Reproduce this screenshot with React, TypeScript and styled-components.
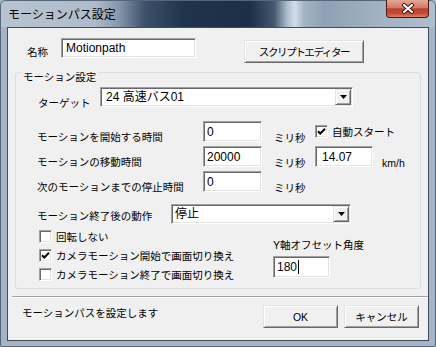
import React from "react";
import styled, { createGlobalStyle } from "styled-components";

const GlobalStyle = createGlobalStyle`
  html, body {
    margin: 0;
    padding: 0;
    background: #a5b5c6;
  }
`;

const sunken = `
  box-sizing: border-box;
  background: #ffffff;
  border-style: solid;
  border-width: 1px;
  border-color: #a0a0a0 #ffffff #ffffff #a0a0a0;
  box-shadow: inset 1px 1px 0 #696969, inset -1px -1px 0 #e3e3e3;
`;

const raised = `
  box-sizing: border-box;
  background: #f0f0f0;
  border-style: solid;
  border-width: 1px;
  border-color: #e3e3e3 #696969 #696969 #e3e3e3;
  box-shadow: inset 1px 1px 0 #ffffff, inset -1px -1px 0 #a0a0a0;
`;

const FrameWindow = styled.div`
  width: 436px;
  height: 347px;
  box-sizing: border-box;
  display: flex;
  flex-direction: column;
  background-color: #a5b5c6;
  border: 1px solid #56657a;
  border-radius: 6px 6px 2px 2px;
  font-family: "Liberation Sans", "Noto Sans CJK JP", sans-serif;
  font-size: 10.5px;
  color: #000;
`;

const Caption = styled.div`
  height: 26px;
  flex: none;
  display: flex;
  justify-content: space-between;
  align-items: flex-start;
  border-radius: 5px 5px 0 0;
  background-color: #5d7189;
  background-image: linear-gradient(90deg, #b6c4d1 0px, #aebccb 94px, #8799ad 117px, #3c5069 144px, #1f334b 184px, #1c2f46 249px, #44586f 273px, #aabbcc 286px, #d2dde8 294px, #a4b4c4 303px, #8fa1b4 324px, #a2b2c2 379px, #b0bfcd 434px);
`;

const CaptionText = styled.span`
  margin: 6px 0 0 7px;
  line-height: 14px;
  font-size: 12px;
  font-family: "Noto Sans CJK JP", sans-serif;
  color: #000;
`;

const CloseBtn = styled.div`
  width: 43px;
  height: 18px;
  margin-right: 6px;
  margin-top: -1px;
  box-sizing: border-box;
  border: 1px solid #4a1a12;
  border-top-width: 0;
  border-radius: 0 0 4px 4px;
  display: flex;
  align-items: center;
  justify-content: center;
  background-color: #c64a34;
  background-image: linear-gradient(180deg, #e4a797, #d27a66 45%, #c1412b 52%, #c24a33 78%, #de7f63);
`;

const ClientArea = styled.div`
  flex: none;
  width: 422px;
  height: 314px;
  margin-left: 6px;
  box-sizing: border-box;
  border: 1px solid #3f4c5b;
  background: #f0f0f0;
  display: flex;
  flex-direction: column;
`;

const NameRow = styled.div`
  display: flex;
  align-items: flex-start;
  height: 25px;
  margin-top: 10px;
  padding-left: 19px;
`;

const FieldLabel = styled.span<{ $w?: number; $top?: number; $pl?: number }>`
  display: block;
  flex: none;
  width: ${(p) => (p.$w ? `${p.$w}px` : "auto")};
  margin-top: ${(p) => p.$top ?? 0}px;
  padding-left: ${(p) => p.$pl ?? 0}px;
  line-height: 14px;
  white-space: nowrap;
  box-sizing: border-box;
`;

const EditBox = styled.div<{ $w: number; $h: number; $pl?: number }>`
  ${sunken};
  flex: none;
  width: ${(p) => p.$w}px;
  height: ${(p) => p.$h}px;
  padding-left: ${(p) => p.$pl ?? 3}px;
  display: flex;
  align-items: center;
  font-size: 12px;
  line-height: 14px;
  white-space: nowrap;
`;

const Caret = styled.span`
  display: inline-block;
  width: 1px;
  height: 14px;
  background: #000;
  margin-left: 1px;
`;

const PushBtn = styled.div<{ $w: number; $ml?: number; $mt?: number; $ls?: number }>`
  ${raised};
  flex: none;
  width: ${(p) => p.$w}px;
  height: 23px;
  margin-left: ${(p) => p.$ml ?? 0}px;
  margin-top: ${(p) => p.$mt ?? 0}px;
  display: flex;
  align-items: center;
  justify-content: center;
  line-height: 14px;
  letter-spacing: ${(p) => p.$ls ?? 0}px;
  white-space: nowrap;
`;

const Group = styled.div`
  position: relative;
  box-sizing: border-box;
  width: 406px;
  height: 217px;
  margin: 9px 0 0 7px;
  border: 1px solid #d5dfe5;
  border-radius: 3px;
  padding: 14px 0 0 21px;
  display: flex;
  flex-direction: column;
`;

const GroupCaption = styled.span`
  position: absolute;
  left: 5px;
  top: -3px;
  padding: 0 2px;
  background: #f0f0f0;
  line-height: 14px;
  white-space: nowrap;
`;

const FieldRow = styled.div<{ $mt?: number }>`
  display: flex;
  align-items: flex-start;
  margin-top: ${(p) => p.$mt ?? 0}px;
`;

const ComboBox = styled.div<{ $w: number }>`
  ${sunken};
  flex: none;
  width: ${(p) => p.$w}px;
  height: 20px;
  padding: 1px;
  display: flex;
  align-items: center;
`;

const ComboValue = styled.span<{ $pl: number }>`
  flex: 1;
  padding-left: ${(p) => p.$pl}px;
  font-size: 12px;
  line-height: 14px;
  white-space: nowrap;
`;

const DropBtn = styled.span`
  ${raised};
  flex: none;
  width: 16px;
  height: 16px;
  display: flex;
  align-items: center;
  justify-content: center;
`;

const TimeGrid = styled.div`
  display: grid;
  grid-template-columns: 166px 59px 53px auto;
  grid-auto-rows: 21px;
  row-gap: 4px;
  margin-top: 11px;
`;

const UnitText = styled.span<{ $top?: number; $pl?: number }>`
  display: block;
  margin-top: ${(p) => p.$top ?? 0}px;
  padding-left: ${(p) => p.$pl ?? 0}px;
  line-height: 14px;
  white-space: nowrap;
`;

const SpeedCell = styled.div`
  display: flex;
  align-items: flex-start;
`;

const CheckLine = styled.div<{ $h?: number; $pl?: number }>`
  display: flex;
  align-items: center;
  height: ${(p) => p.$h ?? 19}px;
  padding-left: ${(p) => p.$pl ?? 0}px;
  line-height: 14px;
  white-space: nowrap;
`;

const CheckSquare = styled.span`
  ${sunken};
  flex: none;
  width: 13px;
  height: 13px;
  margin-right: 4px;
  display: flex;
  align-items: center;
  justify-content: center;
`;

const LowerSection = styled.div`
  display: flex;
  margin-top: 3px;
`;

const CheckColumn = styled.div`
  width: 236px;
  display: flex;
  flex-direction: column;
`;

const OffsetColumn = styled.div`
  display: flex;
  flex-direction: column;
  gap: 4px;
  padding-top: 11px;
`;

const EtchedLine = styled.div`
  margin: 7px 0 0 4px;
  height: 0;
  border-top: 1px solid #a0a0a0;
  border-bottom: 1px solid #ffffff;
`;

const FooterRow = styled.div`
  display: flex;
  align-items: flex-start;
  margin-top: 7px;
  padding: 0 9px 0 14px;
`;

const StatusText = styled.span`
  flex: 1;
  margin-top: 1px;
  line-height: 14px;
  white-space: nowrap;
`;

const ButtonGroup = styled.div`
  display: flex;
  gap: 6px;
`;

const CheckMark = () => (
  <svg width="9" height="9" viewBox="0 0 9 9">
    <path d="M1 4.2 L3.3 6.5 L8 1.8" fill="none" stroke="#000" strokeWidth="2" />
  </svg>
);

const Check: React.FC<{ checked?: boolean; label: string; h?: number; pl?: number }> = ({
  checked,
  label,
  h,
  pl,
}) => (
  <CheckLine $h={h} $pl={pl}>
    <CheckSquare>{checked && <CheckMark />}</CheckSquare>
    {label}
  </CheckLine>
);

const Arrow = () => (
  <svg width="7" height="4" viewBox="0 0 7 4">
    <polygon points="0,0 7,0 3.5,4" fill="#000" />
  </svg>
);

const CloseGlyph = () => (
  <svg width="14" height="11" viewBox="0 0 14 11">
    <path d="M3 2 L11 9 M11 2 L3 9" stroke="#3a1008" strokeWidth="4" strokeLinecap="round" fill="none" />
    <path d="M3 2 L11 9 M11 2 L3 9" stroke="#ffffff" strokeWidth="2.2" strokeLinecap="round" fill="none" />
  </svg>
);

export default function App() {
  return (
    <>
      <GlobalStyle />
      <FrameWindow>
        <Caption>
          <CaptionText>モーションパス設定</CaptionText>
          <CloseBtn>
            <CloseGlyph />
          </CloseBtn>
        </Caption>
        <ClientArea>
          <NameRow>
            <FieldLabel $w={34} $top={7}>
              名称
            </FieldLabel>
            <EditBox $w={135} $h={20} $pl={4}>
              Motionpath
            </EditBox>
            <PushBtn $w={120} $ml={48} $mt={2} $ls={-1.4}>
              スクリプトエディター
            </PushBtn>
          </NameRow>

          <Group>
            <GroupCaption>モーション設定</GroupCaption>
            <FieldRow>
              <FieldLabel $w={63} $top={9} $pl={1}>
                ターゲット
              </FieldLabel>
              <ComboBox $w={253}>
                <ComboValue $pl={4}>24 高速バス01</ComboValue>
                <DropBtn>
                  <Arrow />
                </DropBtn>
              </ComboBox>
            </FieldRow>

            <TimeGrid>
              <FieldLabel $top={9}>モーションを開始する時間</FieldLabel>
              <EditBox $w={59} $h={21}>
                0
              </EditBox>
              <UnitText $top={10} $pl={12}>
                ミリ秒
              </UnitText>
              <Check checked label="自動スタート" h={21} />

              <FieldLabel $top={9}>モーションの移動時間</FieldLabel>
              <EditBox $w={59} $h={21}>
                20000
              </EditBox>
              <UnitText $top={10} $pl={12}>
                ミリ秒
              </UnitText>
              <SpeedCell>
                <EditBox $w={58} $h={21} $pl={6}>
                  14.07
                </EditBox>
                <UnitText $top={10} $pl={9}>
                  km/h
                </UnitText>
              </SpeedCell>

              <FieldLabel $top={9}>次のモーションまでの停止時間</FieldLabel>
              <EditBox $w={59} $h={21}>
                0
              </EditBox>
              <UnitText $top={10} $pl={12}>
                ミリ秒
              </UnitText>
            </TimeGrid>

            <FieldRow $mt={12}>
              <FieldLabel $w={134} $top={5}>
                モーション終了後の動作
              </FieldLabel>
              <ComboBox $w={180}>
                <ComboValue $pl={2}>停止</ComboValue>
                <DropBtn>
                  <Arrow />
                </DropBtn>
              </ComboBox>
            </FieldRow>

            <LowerSection>
              <CheckColumn>
                <Check label="回転しない" pl={2} />
                <Check checked label="カメラモーション開始で画面切り換え" pl={2} />
                <Check label="カメラモーション終了で画面切り換え" pl={2} />
              </CheckColumn>
              <OffsetColumn>
                <FieldLabel>Y軸オフセット角度</FieldLabel>
                <EditBox $w={57} $h={22}>
                  180
                  <Caret />
                </EditBox>
              </OffsetColumn>
            </LowerSection>
          </Group>

          <EtchedLine />

          <FooterRow>
            <StatusText>モーションパスを設定します</StatusText>
            <ButtonGroup>
              <PushBtn $w={75}>OK</PushBtn>
              <PushBtn $w={75}>キャンセル</PushBtn>
            </ButtonGroup>
          </FooterRow>
        </ClientArea>
      </FrameWindow>
    </>
  );
}
